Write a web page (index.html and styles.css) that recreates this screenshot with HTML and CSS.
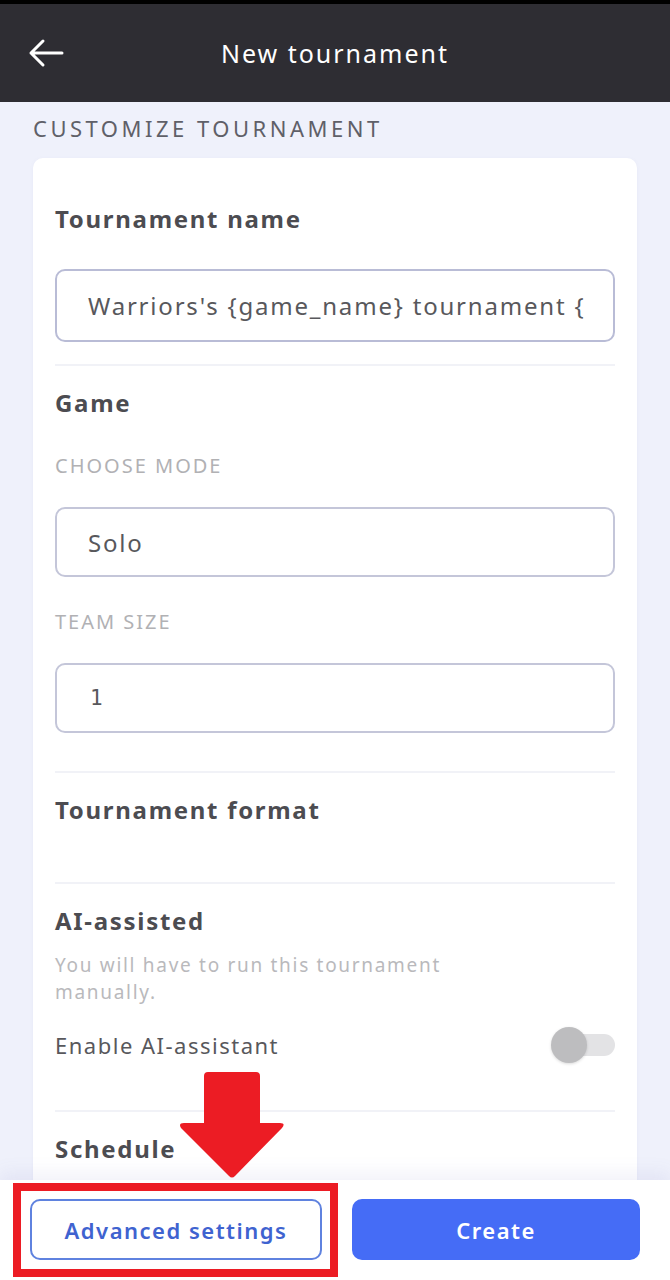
FILE: index.html
```html
<!DOCTYPE html>
<html lang="en">
<head>
<meta charset="utf-8">
<title>New tournament</title>
<link rel="stylesheet" href="styles.css">
</head>
<body>
<div class="screen">
  <div class="statusbar"></div>
  <header class="topbar">
    <button class="back" aria-label="Back">
      <svg width="36" height="30" viewBox="0 0 36 30"><path d="M34 15H3M15 3L3 15l12 12" fill="none" stroke="#fff" stroke-width="3" stroke-linecap="round" stroke-linejoin="round"/></svg>
    </button>
    <h1 class="topbar-title">New tournament</h1>
  </header>
  <main class="content">
    <h2 class="page-section">CUSTOMIZE TOURNAMENT</h2>
    <div class="card">
      <section class="block block-first">
        <h3 class="block-title">Tournament name</h3>
        <div class="field field-name">Warriors's {game_name} tournament {</div>
      </section>
      <section class="block block-game">
        <h3 class="block-title">Game</h3>
        <div class="label">CHOOSE MODE</div>
        <div class="field">Solo</div>
        <div class="label label-team">TEAM SIZE</div>
        <div class="field field-num">1</div>
      </section>
      <section class="block block-format">
        <h3 class="block-title">Tournament format</h3>
      </section>
      <section class="block block-ai">
        <h3 class="block-title">AI-assisted</h3>
        <p class="desc">You will have to run this tournament<br>manually.</p>
        <div class="toggle-row">
          <span class="toggle-label">Enable AI-assistant</span>
          <span class="toggle"><span class="knob"></span></span>
        </div>
      </section>
      <section class="block block-last">
        <h3 class="block-title">Schedule</h3>
      </section>
    </div>
  </main>
  <footer class="actions">
    <button class="btn btn-outline">Advanced settings</button>
    <button class="btn btn-primary">Create</button>
    <div class="hl-box"></div>
    <svg class="hl-arrow" width="110" height="108" viewBox="0 0 110 108">
      <path d="M26 4 Q26 0 30 0 H78 Q82 0 82 4 V51 H102 Q108 51 104 56 L57 104 Q54 107 51 104 L3 56 Q0 51 6 51 H26 Z" fill="#ec1c24"/>
    </svg>
  </footer>
</div>
</body>
</html>
```

FILE: styles.css
```css
* { box-sizing: border-box; }
html, body { margin: 0; padding: 0; }
body {
  font-family: "Noto Sans", "DejaVu Sans", sans-serif;
  background: #eff1fb;
}
.screen {
  width: 670px;
  height: 1280px;
  display: flex;
  flex-direction: column;
  overflow: hidden;
  position: relative;
}
.statusbar { height: 4px; background: #000; flex: none; }
.topbar {
  flex: none;
  height: 98px;
  background: #2e2d33;
  display: flex;
  align-items: center;
  position: relative;
}
.back {
  background: none;
  border: 0;
  padding: 0;
  margin-left: 28px;
  width: 36px;
  height: 30px;
  display: flex;
  position: relative;
  z-index: 1;
}
.topbar-title {
  position: absolute;
  left: 0; right: 0;
  text-align: center;
  margin: 0;
  color: #fff;
  font-weight: 400;
  font-size: 25px;
  letter-spacing: 2px;
}
.content {
  flex: 1;
  overflow: hidden;
  padding: 12px 33px 0;
}
.page-section {
  margin: 0;
  height: 28px;
  line-height: 28px;
  font-size: 22px;
  font-weight: 400;
  color: #5f6068;
  letter-spacing: 3.5px;
}
.card {
  margin-top: 16px;
  background: #fff;
  border-radius: 10px;
  padding: 0 22px;
  box-shadow: 0 1px 4px rgba(120, 120, 170, 0.06);
}
.block {
  border-bottom: 2px solid #f1f2f7;
  padding: 22px 0 39px;
}
.block-first { padding-top: 46px; padding-bottom: 22px; }
.block-game { padding-bottom: 38px; }
.block-format { padding-bottom: 57px; }
.block-ai { padding-bottom: 45px; }
.block-last { border-bottom: 0; padding-bottom: 60px; }
.block-title {
  margin: 0;
  height: 30px;
  line-height: 30px;
  font-size: 24px;
  font-weight: 700;
  color: #4c4c51;
  letter-spacing: 1.7px;
}
.field {
  height: 70px;
  border: 2px solid #c4c6d9;
  border-radius: 10px;
  display: flex;
  align-items: center;
  padding-left: 31px;
  font-size: 24px;
  letter-spacing: 1.8px;
  color: #58585c;
  white-space: nowrap;
  overflow: hidden;
}
.field-name { height: 73px; margin-top: 35px; border-color: #b9bcd6; }
.field-num { font-family: "DejaVu Sans Mono", monospace; font-size: 21px; padding-left: 33px; }
.label {
  margin-top: 36px;
  margin-bottom: 29px;
  height: 24px;
  line-height: 24px;
  font-size: 20px;
  color: #b1b1b4;
  letter-spacing: 2px;
}
.label-team { margin-top: 33px; }
.desc {
  margin: 16px 0 0;
  font-size: 19px;
  line-height: 27px;
  color: #b9b9bc;
  letter-spacing: 1.7px;
}
.toggle-row {
  margin-top: 19px;
  height: 40px;
  display: flex;
  align-items: center;
  justify-content: space-between;
}
.toggle-label { font-size: 22px; color: #58585c; letter-spacing: 1.5px; }
.toggle {
  position: relative;
  width: 64px;
  height: 40px;
  display: flex;
  align-items: center;
  justify-content: flex-end;
}
.toggle::before {
  content: "";
  width: 46px;
  height: 22px;
  border-radius: 11px;
  background: #e3e3e5;
}
.knob {
  position: absolute;
  left: 0;
  top: 2px;
  width: 36px;
  height: 36px;
  border-radius: 50%;
  background: #bdbdbf;
  box-shadow: 0 1px 3px rgba(0, 0, 0, 0.15);
}
.actions {
  flex: none;
  height: 100px;
  background: #fff;
  display: flex;
  gap: 30px;
  padding: 19px 30px 0;
  position: relative;
  box-shadow: 0 -6px 18px rgba(110, 110, 190, 0.10);
}
.btn {
  flex: 1;
  height: 61px;
  border-radius: 10px;
  font-family: inherit;
  font-size: 22px;
  font-weight: 600;
  letter-spacing: 1.5px;
  cursor: pointer;
}
.btn-outline {
  background: #fff;
  border: 2px solid #5f82df;
  color: #3f63d0;
}
.btn-primary {
  background: #456cf6;
  border: 0;
  color: #fff;
}
.hl-box {
  position: absolute;
  left: 13px;
  top: 3px;
  width: 325px;
  height: 94px;
  border: 8px solid #ec1c24;
}
.hl-arrow {
  position: absolute;
  left: 178px;
  top: -108px;
}
```
